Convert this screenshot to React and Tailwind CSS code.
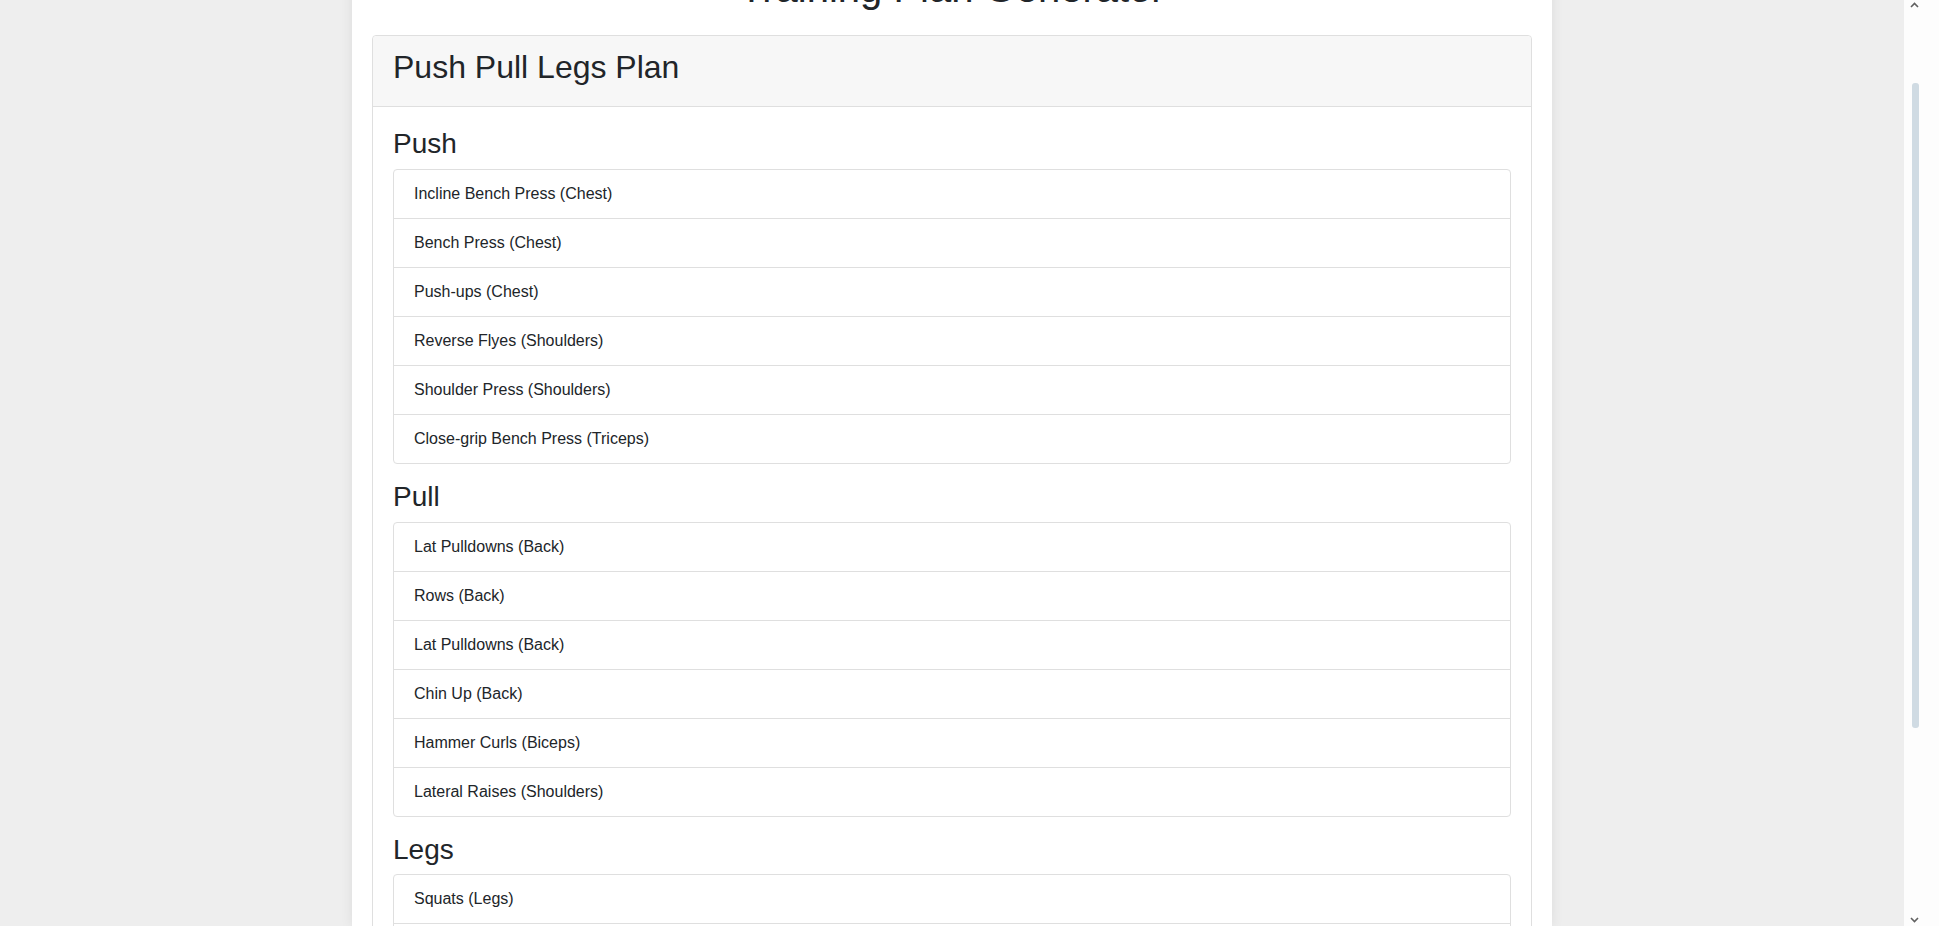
import React from 'react';

const plan = [
  {
    name: 'Push',
    exercises: [
      'Incline Bench Press (Chest)',
      'Bench Press (Chest)',
      'Push-ups (Chest)',
      'Reverse Flyes (Shoulders)',
      'Shoulder Press (Shoulders)',
      'Close-grip Bench Press (Triceps)',
    ],
  },
  {
    name: 'Pull',
    exercises: [
      'Lat Pulldowns (Back)',
      'Rows (Back)',
      'Lat Pulldowns (Back)',
      'Chin Up (Back)',
      'Hammer Curls (Biceps)',
      'Lateral Raises (Shoulders)',
    ],
  },
  {
    name: 'Legs',
    exercises: [
      'Squats (Legs)',
      'Leg Press (Legs)',
      'Lunges (Legs)',
      'Leg Curls (Legs)',
      'Calf Raises (Calves)',
      'Leg Extensions (Legs)',
    ],
  },
];

function DaySection({ day }) {
  return (
    <div>
      <h3 className="text-[28px] leading-[33.6px] mb-2">{day.name}</h3>
      <ul className="border border-[#dfdfdf] rounded mb-4">
        {day.exercises.map((ex, i) => (
          <li
            key={i}
            className="px-5 py-3 text-base leading-6 border-b border-[#dfdfdf] last:border-b-0"
          >
            {ex}
          </li>
        ))}
      </ul>
    </div>
  );
}

function Scrollbar() {
  return (
    <div className="w-[35px] bg-[#fdfdfd] flex flex-col items-start pl-[3px]">
      <div className="w-[15px] flex justify-center pt-[2px] h-[83px]">
        <svg width="9" height="6" viewBox="0 0 9 6">
          <path d="M1 5 L4.5 1.5 L8 5" stroke="#606060" strokeWidth="1.6" fill="none" />
        </svg>
      </div>
      <div className="ml-[5px] w-[7px] h-[645px] rounded-[3px] bg-[#d0dbe3]" />
      <div className="flex-1" />
      <div className="w-[15px] flex justify-center pb-[3px]">
        <svg width="9" height="6" viewBox="0 0 9 6">
          <path d="M1 1 L4.5 4.5 L8 1" stroke="#606060" strokeWidth="1.6" fill="none" />
        </svg>
      </div>
    </div>
  );
}

export default function App() {
  return (
    <div className="flex h-[926px] overflow-hidden bg-[#eeeeee] text-[#212529] font-['Liberation_Sans',Arial,sans-serif]">
      <div className="flex-1 flex justify-center overflow-hidden">
        <div className="w-[1200px] bg-white px-5 -mt-[36px] shadow-[0_0_12px_rgba(0,0,0,0.08)]">
          <h1 className="text-[40px] leading-[48px] text-center mb-[23px]">Training Plan Generator</h1>
          <div className="border border-[#dfdfdf] rounded">
            <div className="bg-[#f7f7f7] border-b border-[#dfdfdf] px-5 py-3 rounded-t">
              <h2 className="text-[32px] leading-[38.4px] mb-2">Push Pull Legs Plan</h2>
            </div>
            <div className="p-5">
              {plan.map((day) => (
                <DaySection key={day.name} day={day} />
              ))}
            </div>
          </div>
        </div>
      </div>
      <Scrollbar />
    </div>
  );
}
